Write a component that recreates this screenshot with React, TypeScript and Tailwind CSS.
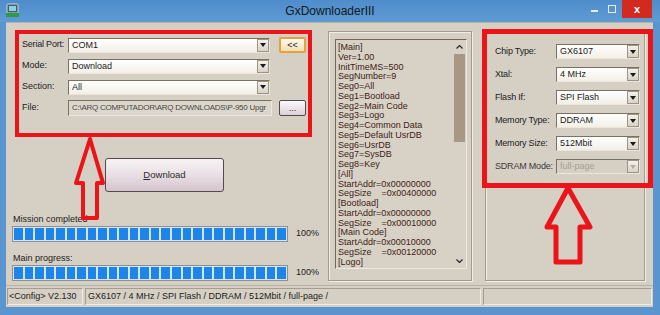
import * as React from "react";

const iniLines = [
  "[Main]",
  "Ver=1.00",
  "InitTimeMS=500",
  "SegNumber=9",
  "Seg0=All",
  "Seg1=Bootload",
  "Seg2=Main Code",
  "Seg3=Logo",
  "Seg4=Common Data",
  "Seg5=Default UsrDB",
  "Seg6=UsrDB",
  "Seg7=SysDB",
  "Seg8=Key",
  "[All]",
  "StartAddr=0x00000000",
  "SegSize    =0x00400000",
  "[Bootload]",
  "StartAddr=0x00000000",
  "SegSize    =0x00010000",
  "[Main Code]",
  "StartAddr=0x00010000",
  "SegSize    =0x00120000",
  "[Logo]",
];

const chipFields = [
  { label: "Chip Type:", value: "GX6107" },
  { label: "Xtal:", value: "4 MHz" },
  { label: "Flash If:", value: "SPI Flash" },
  { label: "Memory Type:", value: "DDRAM" },
  { label: "Memory Size:", value: "512Mbit" },
  { label: "SDRAM Mode:", value: "full-page", disabled: true },
];

function DropArrow({ disabled }: { disabled?: boolean }) {
  return (
    <div className="flex w-[12px] items-center justify-center border border-[#9c9384] bg-gradient-to-b from-[#f4f1ea] to-[#d9d3c6]">
      <svg width="6" height="4" viewBox="0 0 6 4">
        <path d="M0 0h6L3 4z" fill={disabled ? "#b3ac9f" : "#1a1a1a"} />
      </svg>
    </div>
  );
}

function Combo({ value, disabled, className = "" }: { value: string; disabled?: boolean; className?: string }) {
  return (
    <div
      className={`flex h-[15px] border border-[#7a7163] border-r-[#ebe6dc] border-b-[#ebe6dc] ${
        disabled ? "bg-[#d6d0c4] text-[#a59e91]" : "bg-gradient-to-b from-[#ffffff] to-[#f3efe6] text-[#1b1b1b]"
      } ${className}`}
    >
      <div className="flex-1 truncate pl-[3px] text-[9px] leading-[13px]">{value}</div>
      <DropArrow disabled={disabled} />
    </div>
  );
}

function ProgressBar() {
  return (
    <div className="flex items-center gap-[8px]">
      <div className="flex h-[16px] w-[276px] gap-[2px] border border-[#8f8f8f] bg-[#d3e4f4] p-[1px]">
        {Array.from({ length: 26 }).map((_, i) => (
          <div key={i} className="flex-1 bg-[#1d85e8]" />
        ))}
      </div>
      <span className="text-[9px] text-[#1b1b1b]">100%</span>
    </div>
  );
}

export default function App() {
  return (
    <div className="relative flex h-[315px] w-[660px] flex-col overflow-hidden bg-[#5a95cf] pb-[8px] pl-[6px] pr-[7px] font-['Liberation_Sans',Arial,sans-serif] text-[#1b1b1b]">
      {/* title bar */}
      <div className="relative -ml-[6px] -mr-[7px] flex h-[22px] shrink-0 items-center justify-center bg-gradient-to-b from-[#4f8ccb] to-[#5f9bd4]">
        <svg className="absolute left-[6px] top-[3px]" width="13" height="15" viewBox="0 0 13 15">
          <rect x="1" y="1" width="11" height="9" rx="1" fill="#3d5f6e" stroke="#c8d6dc" strokeWidth="1" />
          <rect x="3" y="3" width="7" height="5" fill="#8fd0e0" />
          <rect x="0" y="10" width="13" height="4" fill="#2f9a45" />
        </svg>
        <span className="text-[12px] text-[#101820]">GxDownloaderIII</span>
        <div className="absolute right-[62px] top-[10px] h-[2px] w-[7px] bg-[#e8eef6]" />
        <div className="absolute right-[44px] top-[5px] h-[8px] w-[8px] border border-[#e8eef6]" />
        <div className="absolute right-[8px] top-0 flex h-[18px] w-[30px] items-center justify-center bg-[#d32a20] text-[11px] font-bold text-white">
          x
        </div>
      </div>

      {/* client area */}
      <div className="flex min-h-0 flex-1 flex-col border-t border-[#b8b2a6] bg-[#d6d0c4]">
        <div className="flex h-[262px] shrink-0">
          {/* left column */}
          <div className="flex w-[322px] flex-col">
            <div className="ml-[9px] mt-[7px] flex h-[107px] w-[297px] flex-col gap-[5px] border-[4px] border-[#ea1419] pl-[3px] pt-[3px]">
              <div className="flex h-[16px] items-center">
                <span className="w-[46px] text-[9px] tracking-[-0.2px]">Serial Port:</span>
                <Combo value="COM1" className="w-[202px]" />
                <button className="ml-[9px] flex h-[16px] w-[27px] items-center justify-center rounded-[2px] border-2 border-[#e6a23a] bg-gradient-to-b from-[#fffaf0] to-[#f0dfb4] text-[9px] leading-none">
                  &lt;&lt;
                </button>
              </div>
              <div className="flex h-[16px] items-center">
                <span className="w-[46px] text-[9px]">Mode:</span>
                <Combo value="Download" className="w-[202px]" />
              </div>
              <div className="flex h-[16px] items-center">
                <span className="w-[46px] text-[9px]">Section:</span>
                <Combo value="All" className="w-[202px]" />
              </div>
              <div className="flex h-[16px] items-center">
                <span className="w-[46px] text-[9px]">File:</span>
                <div className="flex h-[16px] w-[204px] items-center overflow-hidden whitespace-nowrap border border-[#7a7163] border-r-[#ebe6dc] border-b-[#ebe6dc] bg-[#dcd7cd] pl-[3px] text-[8px] tracking-[-0.25px] text-[#4a4640]">
                  C:\ARQ COMPUTADOR\ARQ DOWNLOADS\P-950 Upgr
                </div>
                <button className="ml-[7px] flex h-[16px] w-[27px] items-center justify-center rounded-[2px] border border-[#4e4a4e] bg-gradient-to-b from-[#fbf9fb] to-[#ddd0d8] text-[9px] leading-[8px]">
                  ...
                </button>
              </div>
            </div>

            <button className="ml-[99px] mt-[21px] flex h-[34px] w-[119px] items-center justify-center rounded-[3px] border border-[#54494f] bg-gradient-to-b from-[#f7f3f5] via-[#e9dfe4] to-[#d5c4cd] text-[9.5px] text-[#2a2a2a]">
              <span>
                <span className="underline">D</span>ownload
              </span>
            </button>

            <div className="ml-[7px] mt-[22px] h-[11px] text-[9px] leading-[11px]">Mission completed</div>
            <div className="ml-[6px] mt-[1px]">
              <ProgressBar />
            </div>
            <div className="ml-[7px] mt-[11px] h-[11px] text-[9px] leading-[11px]">Main progress:</div>
            <div className="ml-[6px] mt-[1px]">
              <ProgressBar />
            </div>
          </div>

          {/* ini viewer */}
          <div className="mt-[8px] h-[250px] w-[144px] border border-[#a29b8e] pl-[6px] pr-[4px] pt-[7px] shadow-[inset_1px_1px_0_#f2eee6,1px_1px_0_#f2eee6]">
            <div className="flex h-[230px] border border-[#716858] border-r-[#eee9e0] border-b-[#eee9e0] bg-[#d8d2c6]">
              <div className="flex-1 overflow-hidden pl-[2px] pt-[3px] text-[9px] leading-[9.75px] text-[#3e1c15]">
                {iniLines.map((l, i) => (
                  <div key={i} className="whitespace-pre">
                    {l}
                  </div>
                ))}
              </div>
              <div className="flex w-[14px] flex-col items-center bg-[#d8d2c6]">
                <div className="flex h-[14px] items-center justify-center">
                  <svg width="7" height="4" viewBox="0 0 7 4">
                    <path d="M0.5 3.5L3.5 0.5L6.5 3.5" stroke="#2a2a2a" strokeWidth="1.2" fill="none" />
                  </svg>
                </div>
                <div className="h-[88px] w-[11px] bg-[#a89883]" />
                <div className="flex-1" />
                <div className="flex h-[14px] items-center justify-center">
                  <svg width="7" height="4" viewBox="0 0 7 4">
                    <path d="M0.5 0.5L3.5 3.5L6.5 0.5" stroke="#2a2a2a" strokeWidth="1.2" fill="none" />
                  </svg>
                </div>
              </div>
            </div>
          </div>

          {/* chip settings */}
          <div className="relative ml-[13px] mt-[9px] h-[249px] w-[160px] border border-[#a29b8e] shadow-[inset_1px_1px_0_#f2eee6,1px_1px_0_#f2eee6]">
            <div className="flex flex-col gap-[8px] pl-[9px] pt-[11px]">
              {chipFields.map((f) => (
                <div key={f.label} className="flex h-[15px] items-center">
                  <span className={`w-[61px] whitespace-nowrap text-[9px] tracking-[-0.2px] ${f.disabled ? "text-[#3a3a3a]" : ""}`}>
                    {f.label}
                  </span>
                  <Combo value={f.value} disabled={f.disabled} className="w-[84px]" />
                </div>
              ))}
            </div>
            <div className="absolute -left-[4px] -top-[4px] h-[159px] w-[171px] border-[5px] border-[#ea1419]" />
          </div>
        </div>

        {/* status bar */}
        <div className="flex h-[22px] shrink-0 items-stretch gap-[2px] whitespace-nowrap border-t border-[#b8b2a6] px-[1px] py-[2px] text-[9px]">
          <div className="flex w-[76px] items-center overflow-hidden border border-[#a49d90] border-r-[#f0ece4] border-b-[#f0ece4] pl-[1px]">
            &lt;Config&gt; V2.130
          </div>
          <div className="flex w-[396px] items-center overflow-hidden border border-[#a49d90] border-r-[#f0ece4] border-b-[#f0ece4] pl-[2px]">
            GX6107 / 4 MHz / SPI Flash / DDRAM / 512Mbit / full-page /
          </div>
          <div className="flex-1 border border-[#a49d90] border-r-[#f0ece4] border-b-[#f0ece4]" />
        </div>
      </div>

      {/* annotation arrows */}
      <svg className="pointer-events-none absolute left-0 top-0" width="660" height="315">
        <path d="M90 139 L103 183 L97 183 L97 218 L83 218 L83 183 L76 183 Z" fill="none" stroke="#ea1419" strokeWidth="4" strokeLinejoin="round" />
        <path d="M568 188 L590 227 L580 227 L580 262 L556 262 L556 227 L547 227 Z" fill="none" stroke="#ea1419" strokeWidth="5" strokeLinejoin="round" />
      </svg>
    </div>
  );
}
